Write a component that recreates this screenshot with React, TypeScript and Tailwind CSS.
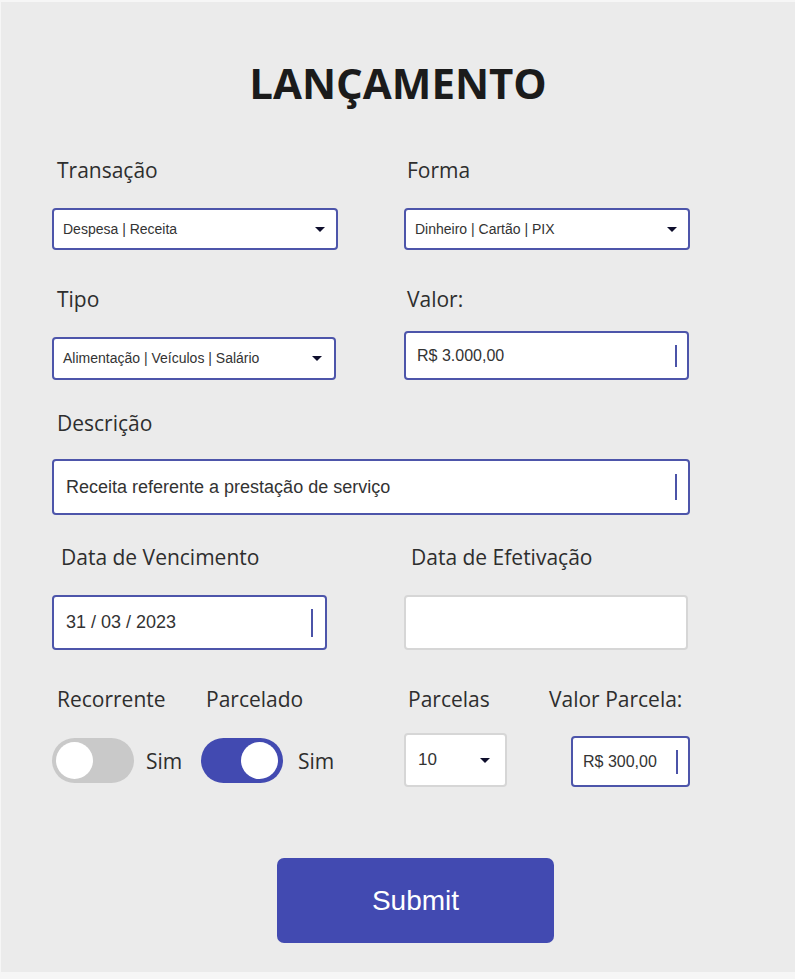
import type { ReactNode } from 'react'

const label = "text-[21px] leading-[28px] text-[#2e2e2e] [font-family:'Open_Sans',sans-serif]"
const field = "flex items-center bg-white border-2 rounded-[4px] text-[#333] [font-family:'Liberation_Sans',Arial,sans-serif]"

function Caret({ className = '' }: { className?: string }) {
  return (
    <svg className={className} width="10" height="5" viewBox="0 0 10 5">
      <path d="M0 0H10L5 5Z" fill="#0e0e2c" />
    </svg>
  )
}

function Cursor({ className = '' }: { className?: string }) {
  return <span className={`ml-auto w-[2px] bg-[#4b53a8] ${className}`} />
}

function Label({ children, className = '' }: { children: ReactNode; className?: string }) {
  return <div className={`${label} ${className}`}>{children}</div>
}

function Toggle({ on }: { on: boolean }) {
  return (
    <div className={`flex items-center ${on ? 'gap-[15px]' : 'gap-[12px]'}`}>
      <div
        className={
          on
            ? 'flex h-[45px] w-[82px] items-center justify-end rounded-full bg-[#424ab1] pr-[5px]'
            : 'flex h-[45px] w-[82px] items-center rounded-full bg-[#c9c9c9] pl-[4px]'
        }
      >
        <span className="h-[37px] w-[37px] rounded-full bg-white" />
      </div>
      <span className={label}>Sim</span>
    </div>
  )
}

export default function App() {
  return (
    <div className="box-border h-[979px] w-full border-t-2 border-b-[7px] border-l border-[#f6f6f6] bg-[#ebebeb]">
      <h1 className="pt-[60px] text-center text-[42px] leading-[42px] font-bold text-[#1b1b1b] [font-family:'Open_Sans',sans-serif]">
        LANÇAMENTO
      </h1>

      <div className="pl-[51px]">
        {/* linha 1 */}
        <div className="mt-[52px] flex gap-[66px]">
          <div className="flex w-[286px] flex-col">
            <Label className="pl-[5px]">Transação</Label>
            <div className={`${field} mt-[24px] h-[42px] border-[#4d55aa] pl-[9px] pr-[11px] text-[14px]`}>
              <span>Despesa | Receita</span>
              <Caret className="ml-auto" />
            </div>
          </div>
          <div className="flex w-[286px] flex-col">
            <Label className="pl-[3px]">Forma</Label>
            <div className={`${field} mt-[24px] h-[42px] border-[#4d55aa] pl-[9px] pr-[11px] text-[14px]`}>
              <span>Dinheiro | Cartão | PIX</span>
              <Caret className="ml-auto" />
            </div>
          </div>
        </div>

        {/* linha 2 */}
        <div className="mt-[35px] flex">
          <div className="flex w-[352px] flex-col">
            <Label className="pl-[5px]">Tipo</Label>
            <div className={`${field} mt-[24px] h-[43px] w-[284px] border-[#4d55aa] pl-[9px] pr-[12px] text-[14px]`}>
              <span>Alimentação | Veículos | Salário</span>
              <Caret className="ml-auto" />
            </div>
          </div>
          <div className="flex flex-col">
            <Label className="pl-[3px]">Valor:</Label>
            <div className={`${field} mt-[18px] h-[49px] w-[285px] border-[#4d55aa] pl-[11px] pr-[10px] text-[16px]`}>
              <span>R$ 3.000,00</span>
              <Cursor className="h-[22px]" />
            </div>
          </div>
        </div>

        {/* linha 3 */}
        <div className="mt-[29px] flex flex-col">
          <Label className="pl-[5px]">Descrição</Label>
          <div className={`${field} mt-[22px] h-[56px] w-[638px] border-[#4d55aa] pl-[12px] pr-[11px] text-[18px]`}>
            <span>Receita referente a prestação de serviço</span>
            <Cursor className="h-[26px]" />
          </div>
        </div>

        {/* linha 4 */}
        <div className="mt-[28px] flex">
          <div className="flex w-[352px] flex-col">
            <Label className="pl-[9px]">Data de Vencimento</Label>
            <div className={`${field} mt-[24px] h-[55px] w-[275px] border-[#4d55aa] pl-[12px] pr-[12px] text-[18px]`}>
              <span>31 / 03 / 2023</span>
              <Cursor className="h-[28px]" />
            </div>
          </div>
          <div className="flex flex-col">
            <Label className="pl-[7px]">Data de Efetivação</Label>
            <div className={`${field} mt-[24px] h-[55px] w-[284px] border-[#d6d6d6]`} />
          </div>
        </div>

        {/* linha 5 */}
        <div className="mt-[35px] flex items-start">
          <div className="flex w-[149px] flex-col">
            <Label className="pl-[5px]">Recorrente</Label>
            <div className="mt-[25px]">
              <Toggle on={false} />
            </div>
          </div>
          <div className="flex w-[203px] flex-col">
            <Label className="pl-[5px]">Parcelado</Label>
            <div className="mt-[25px]">
              <Toggle on />
            </div>
          </div>
          <div className="flex w-[145px] flex-col">
            <Label className="pl-[4px]">Parcelas</Label>
            <div className={`${field} mt-[20px] h-[54px] w-[103px] border-[#d6d6d6] pl-[12px] pr-[15px] text-[17px]`}>
              <span>10</span>
              <Caret className="ml-auto" />
            </div>
          </div>
          <div className="flex flex-col">
            <Label>Valor Parcela:</Label>
            <div className={`${field} mt-[23px] ml-[22px] h-[51px] w-[119px] border-[#4d55aa] pl-[10px] pr-[10px] text-[16px]`}>
              <span>R$ 300,00</span>
              <Cursor className="h-[24px]" />
            </div>
          </div>
        </div>

        {/* enviar */}
        <div className="mt-[71px] pl-[225px]">
          <button
            type="button"
            className="h-[85px] w-[277px] rounded-[7px] bg-[#424ab1] text-[28px] text-white [font-family:'Liberation_Sans',Arial,sans-serif]"
          >
            Submit
          </button>
        </div>
      </div>
    </div>
  )
}
